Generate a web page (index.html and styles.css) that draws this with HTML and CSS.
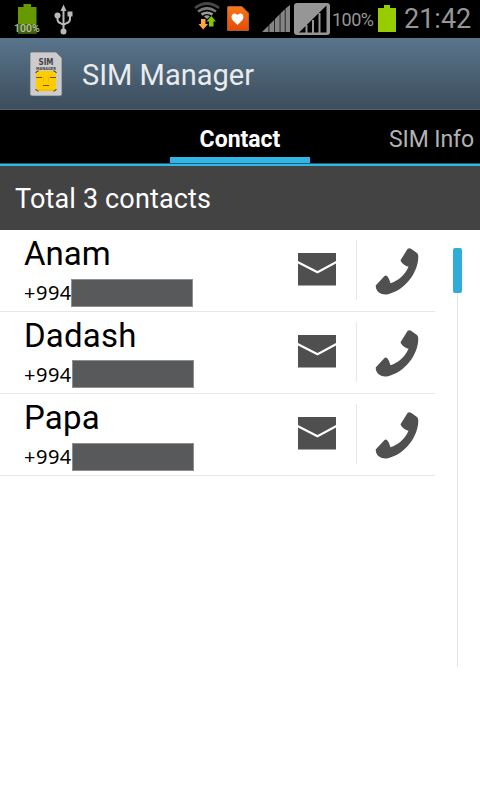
FILE: index.html
```html
<!DOCTYPE html>
<html lang="en">
<head>
    <meta charset="UTF-8">
    <meta name="viewport" content="width=device-width, initial-scale=1.0">
    <title>SIM Manager</title>
    <link rel="stylesheet" href="styles.css">
</head>
<body>
    <svg width="0" height="0" class="defs">
        <linearGradient id="orange" x2="0" y2="1"><stop stop-color="#f97816"/><stop offset="1" stop-color="#e44b05"/></linearGradient>
        <symbol id="mail" viewBox="0 0 38 33">
            <path d="M0 0H38V8L19.500 18L0 8Z"/>
            <path d="M0 10.500L19.500 20.500L38 10.500V32.500H0Z"/>
        </symbol>
        <symbol id="phone" viewBox="0 0 44 48">
            <path d="M32.500 1Q34 -.2 36 .8L42 5Q43.300 6 43.300 9C43 25 30 42 13 46.300Q7.500 47.300 4 44.500Q.8 42 .7 37.500L9.500 28Q11 27 12.500 28.500Q14.500 31 15.500 35.200C23 33 30 27 33.500 18.800Q28.500 17.500 26 13.500Q25.300 12.500 26 11.500Z"/>
        </symbol>
    </svg>
    <div class="status">
        <div class="battery-left">
            <svg width="20" height="30" viewBox="0 0 20 30"><path d="M6.500 0h7.500v3h5.500v26.500H1V3h5.500z" fill="#669a00"/><path d="M1 20h18.500v9.500H1z" fill="#40620a"/></svg>
            <span>100%</span>
        </div>
        <svg class="usb" width="20" height="31" viewBox="0 0 20 31" fill="none" stroke="#b9b9b9" stroke-width="2">
            <path d="M9.500 5V27M3.500 11V15Q3.500 18 6 19L9.500 21M16 9V15Q16 18 13 19L9.500 21"/>
            <path d="M9.500 .5L12.500 7H6.500ZM13.500 7.500h5v5h-5z" fill="#b9b9b9" stroke="none"/>
            <circle cx="3.500" cy="11.500" r="3" fill="#b9b9b9" stroke="none"/>
            <circle cx="9.500" cy="27.500" r="3" fill="#b9b9b9" stroke="none"/>
        </svg>
        <svg class="wifi" width="26" height="30" viewBox="0 0 26 30" fill="none" stroke-width="2.700">
            <path d="M1 6Q13 -3 25 6" stroke="#464646"/>
            <path d="M4 9.500Q13 3 22 9.500" stroke="#777"/>
            <path d="M7.500 12.500Q13 9 18.500 12.500" stroke="#999"/>
            <path d="M10 14.500Q13 12 16 14.500L13 17Z" fill="#999"/>
            <path d="M7 17h4.500v5H14l-4.800 5.500L4.500 22H7z" fill="#ffa63c"/>
            <path d="M15 24.500h4.500v-5H22l-4.700-5.500L12.500 19.500H15z" fill="#83c600"/>
        </svg>
        <svg class="heart" width="22" height="25" viewBox="0 0 22 25">
            <path d="M1 .5H15L21.500 7V24.500H.5V1Z" fill="url(#orange)" stroke="#9d623c"/>
            <path d="M10.500 19L6 14.500C3.500 12 4.500 7.500 7.500 7.500Q9.500 7.500 10.500 9Q11.500 7.500 13.500 7.500C16.500 7.500 17.500 12 15 14.500Z" fill="#fff"/>
        </svg>
        <svg class="signal" width="28" height="28" viewBox="0 0 28 28" fill="#858585">
            <path d="M0 27L6.500 20.500V27ZM7.300 19.700L12.300 14.700V27H7.300ZM13 14L17.700 9.300V27H13ZM18.400 8.600L22.800 4.200V27H18.400ZM23.500 3.500L28 0V27H23.500Z"/>
        </svg>
        <svg class="signal-box" width="36" height="32" viewBox="0 0 36 32">
            <rect width="36" height="32" rx="3" fill="#969696"/>
            <path d="M5 29.500L32.500 2.500V29.500Z" fill="#000"/>
            <path d="M12.500 22V30M19 17V30M25.500 10V30" stroke="#969696" stroke-width="2"/>
        </svg>
        <span class="percent">100%</span>
        <svg class="battery" width="18" height="27" viewBox="0 0 18 27"><path d="M6 0h6v3h6v24H0V3h6z" fill="#96cc00"/></svg>
        <span class="time">21:42</span>
    </div>
    <header>
        <svg class="logo" width="34" height="46" viewBox="0 0 34 46">
            <path d="M2 1H27L33 7V43Q33 45 31 45H3Q1 45 1 43V2Z" fill="#ccc" stroke="#58636d" stroke-width=".7"/>
            <text x="9.500" y="14" textLength="15" lengthAdjust="spacingAndGlyphs">SIM</text>
            <text class="tiny" x="7" y="19" textLength="20" lengthAdjust="spacingAndGlyphs">MANAGER</text>
            <rect x="7" y="20" width="20" height="20" rx="2.500" fill="#fc0"/>
            <path d="M7 22V21.500L8.500 20H9.500M24.500 20H25.500L27 21.500V22M7 38V38.500L8.500 40H9.500M24.500 40H25.500L27 38.500V38" fill="none" stroke="#111"/>
            <path d="M7 26.500h6M21 26.500h6M14 34.500h6" stroke="#675614" stroke-width="1"/>
            <path d="M14.500 26v5M19.500 26v5M8 39h18" fill="none" stroke="#e9ac00" stroke-width=".7"/>
        </svg>
        <h1>SIM Manager</h1>
    </header>
    <nav>
        <a class="active">Contact</a>
        <a>SIM Info</a>
    </nav>
    <div class="total">Total 3 contacts</div>
    <main>
        <ul class="contacts">
            <li>
                <div class="info"><h2>Anam</h2><p><span class="number">+994</span><span class="hidden-number"></span></p></div>
                <svg class="mail"><use href="#mail"/></svg>
                <div class="call"><svg><use href="#phone"/></svg></div>
            </li>
            <li>
                <div class="info"><h2 class="spaced">Dadash</h2><p><span class="number">+994</span><span class="hidden-number raised"></span></p></div>
                <svg class="mail"><use href="#mail"/></svg>
                <div class="call"><svg><use href="#phone"/></svg></div>
            </li>
            <li>
                <div class="info"><h2 class="spaced">Papa</h2><p><span class="number">+994</span><span class="hidden-number shifted"></span></p></div>
                <svg class="mail"><use href="#mail"/></svg>
                <div class="call"><svg><use href="#phone"/></svg></div>
            </li>
        </ul>
        <div class="scroll"><div class="thumb"></div></div>
    </main>
</body>
</html>
```

FILE: styles.css
```css
* {
    box-sizing: border-box;
}

body {
    margin: 0;
    width: 480px;
    height: 800px;
    overflow: hidden;
    background: #fff;
    font-family: Roboto, sans-serif;
}

.defs {
    display: block;
}

h1, h2, p, ul {
    margin: 0;
    padding: 0;
    font-weight: 400;
}

/* status bar */
.status {
    display: flex;
    align-items: flex-start;
    height: 38px;
    background: #000;
    color: #969696;
}

.status svg {
    display: block;
    flex: none;
}

.battery-left {
    position: relative;
    width: 20px;
    margin: 4px 0 0 17px;
}

.battery-left span {
    position: absolute;
    left: -3px;
    top: 19px;
    font-size: 10.5px;
    font-weight: 500;
    line-height: 12px;
    color: #b5c2a0;
}

.usb {
    margin: 4px 0 0 17px;
}

.wifi {
    margin: 2px 0 0 120px;
}

.heart {
    margin: 6px 0 0 7px;
}

.signal {
    margin: 5px 0 0 13px;
}

.signal-box {
    margin: 3px 0 0 4px;
}

.percent {
    width: 44px;
    margin-left: 2px;
    font-size: 18px;
    line-height: 40px;
    letter-spacing: -0.5px;
}

.battery {
    margin: 5px 0 0 2px;
}

.time {
    margin-left: 8px;
    font-size: 27px;
    line-height: 39px;
    white-space: nowrap;
}

/* title */
header {
    display: flex;
    align-items: flex-start;
    height: 72px;
    padding: 13px 0 0 29px;
    background: linear-gradient(#59758c, #3d4d5c);
    border-bottom: 1px solid #526474;
}

.logo text {
    font: bold 8px "DejaVu Sans", sans-serif;
    fill: #444;
}

.logo .tiny {
    font-size: 4px;
}

h1 {
    margin-left: 19px;
    font-size: 29px;
    line-height: 49px;
    color: #eaebed;
}

/* tabs */
nav {
    display: flex;
    justify-content: space-between;
    height: 56px;
    padding: 0 6px 0 170px;
    background: #000;
    border-bottom: 2px solid #33b5e5;
    box-shadow: inset 0 -1px #1c617b;
}

nav a {
    font-size: 23px;
    line-height: 60px;
    letter-spacing: -0.1px;
    color: #b2b2b2;
}

nav .active {
    width: 140px;
    height: 53px;
    border-bottom: 6px solid #33b5e5;
    color: #fff;
    font-weight: 700;
    letter-spacing: 0;
    text-align: center;
}

.total {
    height: 64px;
    padding-left: 15px;
    background: #434343;
    color: #fff;
    font-size: 27px;
    line-height: 67px;
    letter-spacing: 0.15px;
}

/* contact list */
main {
    display: flex;
    justify-content: space-between;
}

.contacts {
    width: 435px;
    list-style: none;
}

.contacts li {
    display: flex;
    height: 82px;
    border-bottom: 1px solid #e8e8e8;
}

.info {
    width: 298px;
    padding-left: 24px;
}

h2 {
    height: 49px;
    font-size: 33px;
    line-height: 48px;
    color: #000;
}

.spaced {
    letter-spacing: 0.2px;
}

.info p {
    display: flex;
    height: 28px;
    font: 20px/28px "Noto Sans", sans-serif;
}

.number {
    width: 47px;
    letter-spacing: 0.5px;
    white-space: nowrap;
}

.hidden-number {
    width: 122px;
    height: 28px;
    background: #58595b;
    border: 1px solid #8f8f91;
}

.raised {
    margin: -1px 0 0 1px;
}

.shifted {
    margin-left: 1px;
}

.mail {
    width: 38px;
    height: 33px;
    margin-top: 23.4px;
    fill: #4f4f4f;
}

.call {
    height: 60px;
    margin: 10px 0 0 20px;
    padding: 8px 0 0 18px;
    border-left: 1px solid #e8e8e8;
}

.call svg {
    width: 44px;
    height: 48px;
    fill: #505050;
}

.scroll {
    width: 9px;
    height: 419px;
    margin: 18px 18px 0 0;
    background: linear-gradient(#e4e4e4, #e4e4e4) 4px 0 / 1px 100% no-repeat;
}

.thumb {
    height: 45px;
    border-radius: 2px;
    background: #2facd8;
}
```
